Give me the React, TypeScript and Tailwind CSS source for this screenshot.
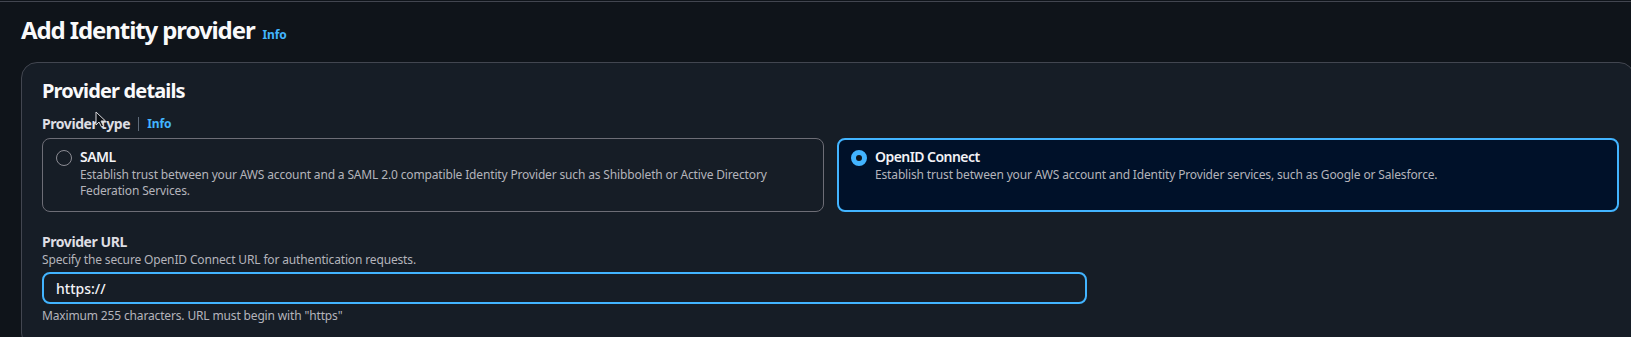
import type { ReactNode } from "react";

function Info() {
  return <span className="text-[12px] font-bold leading-4 tracking-[-0.1px] text-[#42b4ff]">Info</span>;
}

function Radio({ checked }: { checked: boolean }) {
  if (checked) {
    return <span className="mt-[3px] block h-4 w-4 shrink-0 rounded-full border-[5px] border-[#42b4ff] bg-[#0f141a]" />;
  }
  return <span className="mt-[3px] block h-4 w-4 shrink-0 rounded-full border-[1.5px] border-[#8c8c94]" />;
}

function Tile({ checked, title, children }: { checked: boolean; title: string; children: ReactNode }) {
  return (
    <div
      className={
        checked
          ? "flex gap-2 rounded-[8px] border-2 border-[#42b4ff] bg-[#001129] pt-[7px] pb-[11px] pl-3 pr-3"
          : "flex gap-2 rounded-[8px] border border-[#6d6d76] pt-2 pb-3 pl-[13px] pr-3"
      }
    >
      <Radio checked={checked} />
      <div>
        <div className="text-[14px] font-semibold leading-5 tracking-[-0.55px] text-[#f3f3f7]">{title}</div>
        <div className="text-[12px] leading-4 tracking-[-0.15px] text-[#b4b4bb]">{children}</div>
      </div>
    </div>
  );
}

export default function App() {
  return (
    <div
      className="relative h-[337px] w-[1631px] overflow-hidden bg-[#0f141a] text-[#dedee3]"
      style={{ fontFamily: '"Noto Sans", "Open Sans", sans-serif' }}
    >
      <div className="mt-px border-t border-[#424650]" />

      <div className="flex items-baseline gap-[8px] pl-[21px] pt-[13px]">
        <h1 className="text-[24px] font-bold leading-[30px] tracking-[-1.1px] text-[#f9f9fa]">Add Identity provider</h1>
        <Info />
      </div>

      <div className="ml-[21px] mt-[17px] w-[1614px] rounded-[16px] border border-[#424650] bg-[#161d26] px-5 pt-[16px] pb-6">
        <h2 className="text-[20px] font-bold leading-6 tracking-[-0.85px] text-[#f9f9fa]">Provider details</h2>

        <div className="mt-[11px] flex items-center gap-[8px]">
          <span className="text-[14px] font-bold leading-5 tracking-[-0.43px] text-[#dedee3]">Provider type</span>
          <span className="h-[14px] w-px bg-[#5f6b7a]" />
          <Info />
        </div>

        <div className="mt-[4px] grid w-[1577px] grid-cols-2 gap-[13px]">
          <Tile checked={false} title="SAML">
            Establish trust between your AWS account and a SAML 2.0 compatible Identity Provider such as Shibboleth or Active Directory
            Federation Services.
          </Tile>
          <Tile checked title="OpenID Connect">
            Establish trust between your AWS account and Identity Provider services, such as Google or Salesforce.
          </Tile>
        </div>

        <div className="mt-[20px] text-[14px] font-bold leading-5 tracking-[-0.43px] text-[#dedee3]">Provider URL</div>
        <div className="text-[12px] leading-4 tracking-[-0.15px] text-[#b4b4bb]">
          Specify the secure OpenID Connect URL for authentication requests.
        </div>
        <div className="mt-1 flex h-8 w-[1045px] items-center rounded-[8px] border-2 border-[#42b4ff] pl-3 text-[14px] font-medium text-[#f3f3f7]">
          https://
        </div>
        <div className="mt-1 text-[12px] leading-4 tracking-[-0.15px] text-[#b4b4bb]">Maximum 255 characters. URL must begin with "https"</div>
      </div>

      <svg className="absolute left-[95px] top-[111px]" width="12" height="17" viewBox="0 0 12 17">
        <path d="M1 1 L1 14 L4 11 L6.5 16 L8.5 15 L6 10 L10.5 10 Z" fill="#0b0f14" stroke="#d8d8dc" strokeWidth="1" strokeLinejoin="round" />
      </svg>
    </div>
  );
}
